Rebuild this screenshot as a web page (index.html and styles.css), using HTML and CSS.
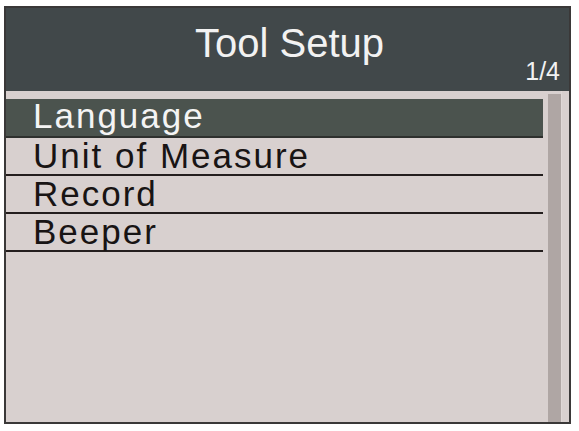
FILE: index.html
```html
<!DOCTYPE html>
<html>
<head>
<meta charset="utf-8">
<link rel="stylesheet" href="styles.css">
</head>
<body>
<div class="frame">
  <div class="header">
    <div class="title">Tool Setup</div>
    <div class="page">1/4</div>
  </div>
  <div class="body">
    <ul class="list">
      <li class="item selected">Language</li>
      <li class="item">Unit of Measure</li>
      <li class="item">Record</li>
      <li class="item">Beeper</li>
    </ul>
    <div class="scrollbar"></div>
    <div class="edge"></div>
  </div>
</div>
</body>
</html>
```

FILE: styles.css
```css
html, body {
  margin: 0;
  padding: 0;
  background: #ffffff;
}
body {
  font-family: "Liberation Sans", Arial, sans-serif;
}
.frame {
  margin: 6px 0 0 4px;
  width: 567px;
  height: 418px;
  box-sizing: border-box;
  border: 2px solid #3a3838;
  background: #d8d0cf;
  display: flex;
  flex-direction: column;
}
.header {
  position: relative;
  height: 83px;
  flex: none;
  background: #41484a;
  box-sizing: border-box;
  padding-top: 11px;
}
.title {
  text-align: center;
  color: #f2f2f2;
  font-size: 40px;
  line-height: 48px;
  padding-left: 4px;
}
.page {
  position: absolute;
  right: 9px;
  top: 51px;
  color: #f2f2f2;
  font-size: 25px;
  line-height: 25px;
}
.body {
  flex: 1;
  display: flex;
  min-height: 0;
}
.list {
  list-style: none;
  margin: 0;
  padding: 8px 0 0 0;
  width: 537px;
  flex: none;
}
.item {
  height: 36px;
  line-height: 36px;
  border-bottom: 2px solid #241e1e;
  padding-left: 27px;
  font-size: 35px;
  letter-spacing: 2px;
  color: #181414;
  white-space: nowrap;
}
.item.selected {
  height: 37px;
  line-height: 33px;
  background: #4b534e;
  color: #f4f4f4;
  border-bottom-color: #2e302e;
}
.scrollbar {
  margin-left: 5px;
  margin-top: 3px;
  width: 13px;
  background: #afa6a4;
  flex: none;
}
.edge {
  flex: 1;
  border-left: 1px solid #ded7d6;
}
```
